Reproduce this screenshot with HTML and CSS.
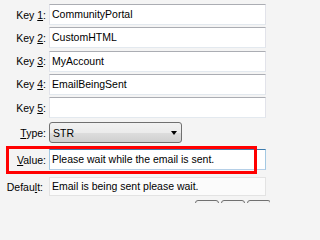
FILE: index.html
```html
<!DOCTYPE html>
<html>
<head>
<meta charset="utf-8">
<link rel="stylesheet" href="styles.css">
</head>
<body>
<div class="form">
  <div class="keys">
    <div class="row"><label class="lbl">Key <u>1</u>:</label><div class="field">CommunityPortal</div></div>
    <div class="row"><label class="lbl">Key <u>2</u>:</label><div class="field">CustomHTML</div></div>
    <div class="row"><label class="lbl">Key <u>3</u>:</label><div class="field">MyAccount</div></div>
    <div class="row"><label class="lbl">Key <u>4</u>:</label><div class="field">EmailBeingSent</div></div>
    <div class="row"><label class="lbl">Key <u>5</u>:</label><div class="field"></div></div>
  </div>
  <div class="row type-row"><label class="lbl"><u>T</u>ype:</label><div class="select"><span>STR</span><span class="arrow"></span></div></div>
  <div class="row value-row"><label class="lbl"><u>V</u>alue:</label><div class="field focused">Please wait while the email is sent.</div></div>
  <div class="row default-row"><label class="lbl lbl-default">Defau<u>l</u>t:</label><div class="readonly">Email is being sent please wait.</div></div>
  <div class="buttons"><div class="btn"></div><div class="btn"></div><div class="btn"></div></div>
  <div class="highlight"></div>
</div>
</body>
</html>
```
FILE: styles.css
```css
html, body {
  margin: 0;
  padding: 0;
  background: #f4f4f4;
  overflow: hidden;
  width: 270px;
  height: 203px;
}
.form {
  position: relative;
  padding-top: 4px;
  font-family: "Liberation Sans", Arial, sans-serif;
  font-size: 10.5px;
  color: #000;
}
.keys {
  display: flex;
  flex-direction: column;
  gap: 2.3px;
}
.row {
  display: flex;
  align-items: center;
}
.lbl {
  width: 46px;
  padding-right: 3px;
  text-align: right;
  white-space: nowrap;
  box-sizing: border-box;
  width: 49px;
}
.field {
  box-sizing: border-box;
  width: 217px;
  height: 21px;
  line-height: 19px;
  padding: 0 2px;
  background: #fff;
  border: 1px solid #e2e3ea;
  border-top-color: #abadb3;
  border-bottom-color: #e3e9ef;
  white-space: nowrap;
  overflow: hidden;
}
.field.focused {
  border-color: #a4c9e3;
  border-top-color: #3d7bad;
  border-bottom-color: #b5cfe7;
}
.type-row {
  margin-top: 4px;
}
.select {
  box-sizing: border-box;
  width: 133px;
  height: 21px;
  display: flex;
  align-items: center;
  justify-content: space-between;
  padding: 0 4px 0 3px;
  border: 1px solid #707070;
  border-radius: 3px;
  background: linear-gradient(#f2f2f2 0%, #ebebeb 50%, #dddddd 51%, #cfcfcf 100%);
}
.arrow {
  width: 0;
  height: 0;
  border-left: 3.5px solid transparent;
  border-right: 3.5px solid transparent;
  border-top: 4px solid #000;
  margin-top: 1px;
}
.value-row {
  margin-top: 6px;
}
.default-row {
  margin-top: 7px;
}
.lbl-default {
  padding-right: 6px;
}
.readonly {
  box-sizing: border-box;
  width: 217px;
  height: 19px;
  line-height: 17px;
  padding: 0 2px;
  background: #fbfbfb;
  border: 1px solid #e3e3e3;
  white-space: nowrap;
}
.buttons {
  display: flex;
  gap: 2px;
  margin-top: 4px;
  padding-left: 195px;
}
.btn {
  flex: none;
  box-sizing: border-box;
  width: 24px;
  height: 22px;
  border: 1px solid #707070;
  border-radius: 3px;
  background: linear-gradient(#f2f2f2, #dddddd);
}
.highlight {
  position: absolute;
  left: 6px;
  top: 146px;
  width: 251px;
  height: 28px;
  box-sizing: border-box;
  border: 3px solid #ff0000;
}
```
